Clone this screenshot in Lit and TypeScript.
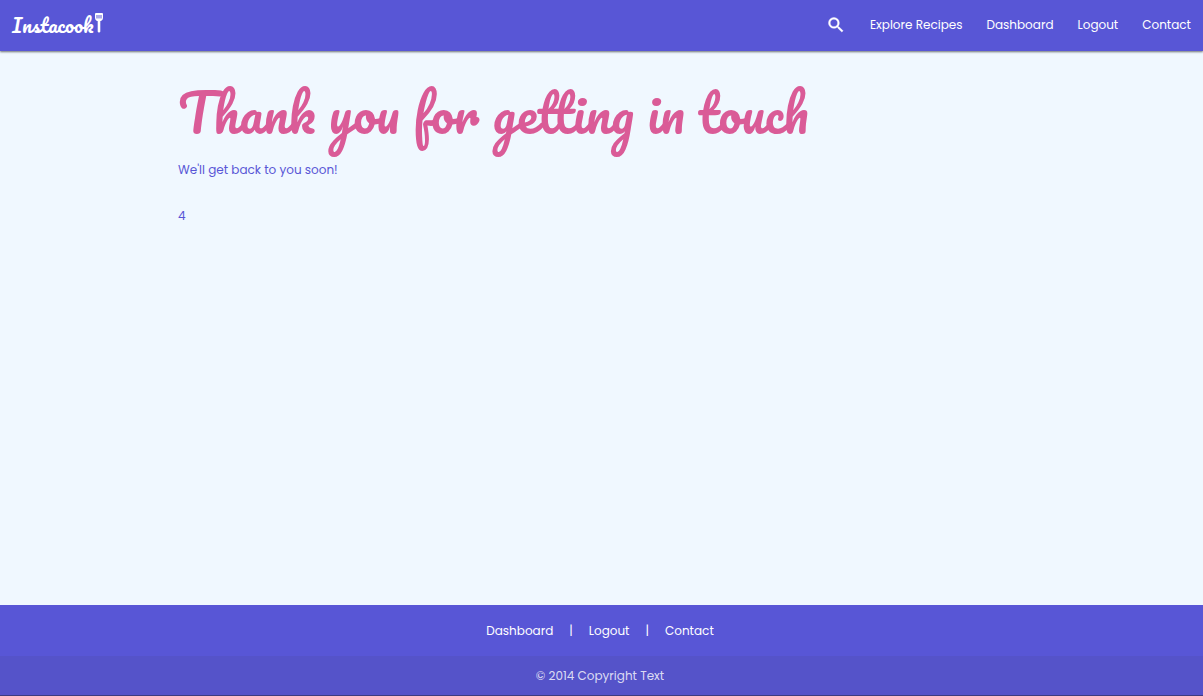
import { LitElement, html, css } from "lit";
import { customElement } from "lit/decorators.js";

@customElement("app-root")
export class AppRoot extends LitElement {
  static styles = css`
    :host {
      display: flex;
      flex-direction: column;
      min-height: 100vh;
      box-sizing: border-box;
      background: #f0f8ff;
      color: #5856d6;
      font: 12px/20px Poppins, Inter, sans-serif;
    }
    a {
      color: #fff;
      text-decoration: none;
    }
    .bar {
      display: flex;
      justify-content: space-between;
      align-items: center;
      height: 50px;
      padding-bottom: 1px;
      background: #5856d6;
      box-shadow: 0 1px 2px rgba(0, 0, 0, 0.55);
    }
    .brand {
      display: flex;
      align-items: center;
      gap: 2px;
      padding-left: 12px;
      font: 20px/28px Pacifico, Lato, cursive;
    }
    .spatula {
      width: 8px;
      height: 20px;
      margin-bottom: 4px;
    }
    .menu {
      display: flex;
      align-items: center;
      margin: 0;
      padding: 0;
      list-style: none;
    }
    .menu a {
      display: flex;
      padding: 0 12px;
    }
    .search {
      width: 20px;
      height: 20px;
    }
    main {
      flex: 1;
      width: 70.4%;
      margin: 0 auto;
    }
    h1 {
      margin: 27px 0 13px;
      font: 51px/69px Pacifico, Lato, cursive;
      color: #da5b97;
      white-space: nowrap;
    }
    p {
      margin: 0 0 26px;
    }
    footer {
      background: #5856d6;
    }
    .links {
      display: flex;
      justify-content: center;
      align-items: center;
      gap: 16px;
      height: 51px;
      padding-right: 3px;
      color: #fff;
    }
    .copyright {
      height: 39px;
      padding-right: 3px;
      line-height: 39px;
      text-align: center;
      color: rgba(255, 255, 255, 0.8);
      background: rgba(51, 51, 51, 0.08);
      border-bottom: 1px solid #3d3c80;
    }
  `;

  render() {
    return html`
      <header>
        <nav class="bar">
          <a class="brand" href="#">
            <span>Instacook</span>
            <svg class="spatula" viewBox="0 0 8 20" aria-hidden="true">
              <path
                fill="#fff"
                fill-rule="evenodd"
                d="M1 0h6q1 0 1 1v4q0 2-2 3H5.300v10.500q0 1-1.300 1t-1.300-1V8H2Q0 7 0 5V1q0-1 1-1zM1.500 2v3.500h1V2zM3.500 2v3.500h1V2zM5.500 2v3.500h1V2z"
              />
            </svg>
          </a>
          <ul class="menu">
            <li>
              <a href="#" aria-label="Search">
                <svg class="search" viewBox="0 0 24 24" aria-hidden="true">
                  <path
                    fill="#fff"
                    stroke="#fff"
                    stroke-width="0.500"
                    d="M15.500 14h-.79l-.28-.27A6.471 6.471 0 0 0 16 9.500 6.500 6.500 0 1 0 9.500 16c1.610 0 3.090-.59 4.230-1.570l.27.28v.79l5 4.990L20.490 19l-4.990-5zm-6 0C7.010 14 5 11.990 5 9.500S7.010 5 9.500 5 14 7.010 14 9.500 11.990 14 9.500 14z"
                  />
                </svg>
              </a>
            </li>
            <li><a href="#">Explore Recipes</a></li>
            <li><a href="#">Dashboard</a></li>
            <li><a href="#">Logout</a></li>
            <li><a href="#">Contact</a></li>
          </ul>
        </nav>
      </header>
      <main>
        <h1>Thank you for getting in touch</h1>
        <p>We'll get back to you soon!</p>
        <p>4</p>
      </main>
      <footer>
        <div class="links">
          <a href="#">Dashboard</a>
          <span>|</span>
          <a href="#">Logout</a>
          <span>|</span>
          <a href="#">Contact</a>
        </div>
        <div class="copyright">© 2014 Copyright Text</div>
      </footer>
    `;
  }
}
